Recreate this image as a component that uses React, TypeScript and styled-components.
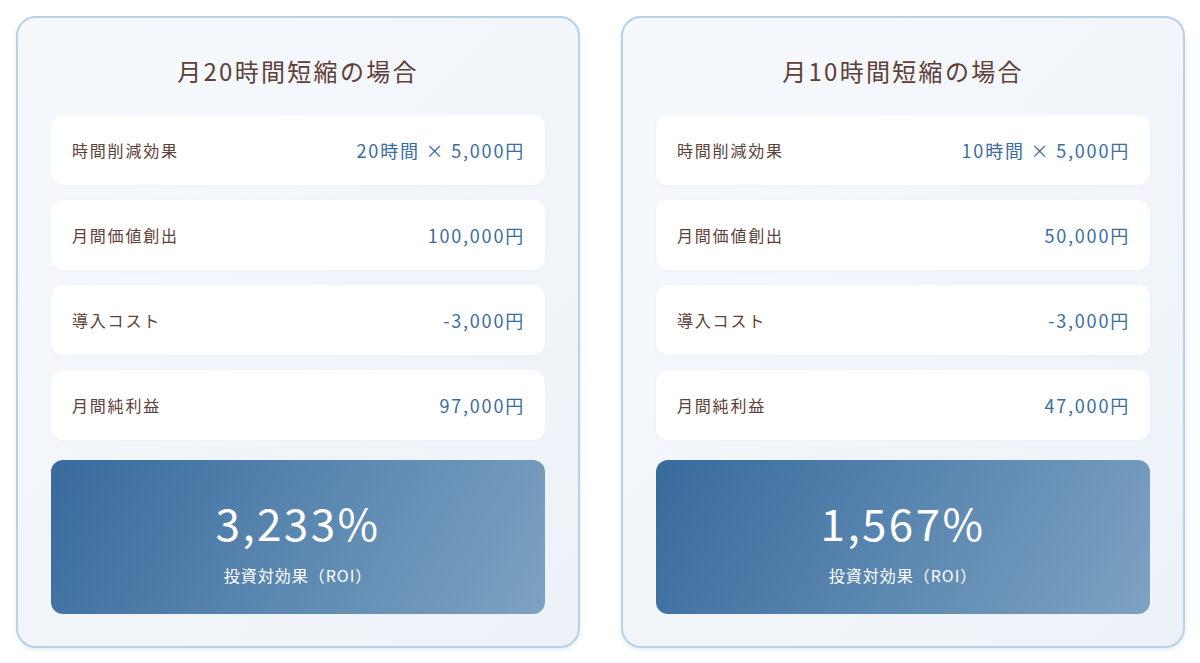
import React from 'react';
import styled, { createGlobalStyle } from 'styled-components';

interface Scenario {
  title: string;
  rows: { label: string; value: string }[];
  roi: string;
}

const scenarios: Scenario[] = [
  {
    title: '月20時間短縮の場合',
    rows: [
      { label: '時間削減効果', value: '20時間 × 5,000円' },
      { label: '月間価値創出', value: '100,000円' },
      { label: '導入コスト', value: '-3,000円' },
      { label: '月間純利益', value: '97,000円' },
    ],
    roi: '3,233%',
  },
  {
    title: '月10時間短縮の場合',
    rows: [
      { label: '時間削減効果', value: '10時間 × 5,000円' },
      { label: '月間価値創出', value: '50,000円' },
      { label: '導入コスト', value: '-3,000円' },
      { label: '月間純利益', value: '47,000円' },
    ],
    roi: '1,567%',
  },
];

const GlobalStyle = createGlobalStyle`
  html, body {
    margin: 0;
    padding: 0;
    background: #ffffff;
    font-family: "Noto Sans CJK JP", "Noto Sans", sans-serif;
  }
`;

const Page = styled.div`
  display: flex;
  gap: 41px;
  padding: 16px 15px 15px 16px;
  box-sizing: border-box;
  width: 1200px;
`;

const Card = styled.section`
  flex: 1;
  display: flex;
  flex-direction: column;
  box-sizing: border-box;
  height: 632px;
  padding: 33px 33px 32px;
  border: 2px solid #b6d1ea;
  border-radius: 20px;
  background: linear-gradient(135deg, #f6f9fc 0%, #edf2f8 100%);
  box-shadow: 0 2px 4px rgba(90, 130, 170, 0.15);
`;

const Title = styled.h2`
  margin: 0 0 26px;
  padding-top: 2px;
  font-size: 24px;
  line-height: 36px;
  font-weight: 400;
  letter-spacing: 2.3px;
  color: #5d4037;
  text-align: center;
`;

const Rows = styled.div`
  display: flex;
  flex-direction: column;
  gap: 15.5px;
`;

const Row = styled.div`
  display: flex;
  align-items: center;
  justify-content: space-between;
  height: 69.5px;
  padding: 0 20px 0 21px;
  background: #ffffff;
  border-radius: 12px;
  box-shadow: 0 1px 3px rgba(120, 150, 190, 0.06);
`;

const Label = styled.span`
  font-size: 16px;
  color: #5d4037;
  letter-spacing: 1.8px;
`;

const Value = styled.span`
  font-size: 18px;
  color: #3b6c9e;
  letter-spacing: 1.8px;
`;

const RoiBox = styled.div`
  margin-top: 20px;
  height: 154px;
  box-sizing: border-box;
  padding-top: 35px;
  border-radius: 12px;
  background: linear-gradient(120deg, #386a9c 0%, #5a87b0 50%, #7ea2c2 100%);
  color: #ffffff;
  text-align: center;
`;

const RoiNumber = styled.div`
  font-size: 44px;
  line-height: 54px;
  font-weight: 400;
  letter-spacing: 2.4px;
`;

const RoiLabel = styled.div`
  margin-top: 14px;
  font-size: 16px;
  line-height: 24px;
  letter-spacing: 1px;
`;

const App: React.FC = () => (
  <>
    <GlobalStyle />
    <Page>
      {scenarios.map(s => (
        <Card key={s.title}>
          <Title>{s.title}</Title>
          <Rows>
            {s.rows.map(r => (
              <Row key={r.label}>
                <Label>{r.label}</Label>
                <Value>{r.value}</Value>
              </Row>
            ))}
          </Rows>
          <RoiBox>
            <RoiNumber>{s.roi}</RoiNumber>
            <RoiLabel>投資対効果（ROI）</RoiLabel>
          </RoiBox>
        </Card>
      ))}
    </Page>
  </>
);

export default App;
